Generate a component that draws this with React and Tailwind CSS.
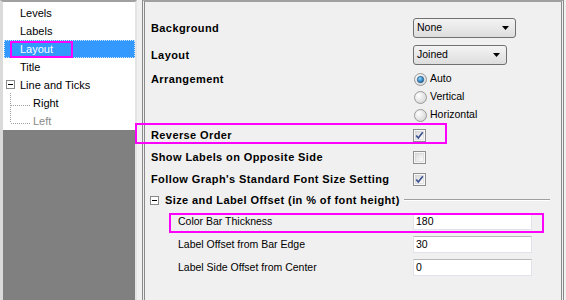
import React from 'react';

const font = { fontFamily: '"Liberation Sans", Arial, sans-serif' };

const ArrowDown = () => (
  <svg width="8" height="4" viewBox="0 0 8 4" className="shrink-0">
    <path d="M0 0 H7 L3.5 4 Z" fill="#000" />
  </svg>
);

const Dropdown = ({ value, className }) => (
  <div
    className={`h-[20px] flex items-center justify-between pl-[3px] pr-[5px] rounded-[3px] border border-[#707070] bg-gradient-to-b from-[#f4f4f4] to-[#dddddd] text-[10.5px] ${className}`}
  >
    <span>{value}</span>
    <ArrowDown />
  </div>
);

const Radio = ({ checked }) => (
  <svg width="13" height="13" viewBox="0 0 13 13" className="shrink-0">
    <defs>
      <radialGradient id="rb" cx="0.35" cy="0.35" r="0.8">
        <stop offset="0" stopColor="#ffffff" />
        <stop offset="1" stopColor="#d0d0d0" />
      </radialGradient>
      <radialGradient id="rd" cx="0.4" cy="0.35" r="0.7">
        <stop offset="0" stopColor="#8bd4ff" />
        <stop offset="1" stopColor="#0f5e9c" />
      </radialGradient>
    </defs>
    <circle cx="6.5" cy="6.5" r="6" fill="url(#rb)" stroke="#9a9a9a" />
    {checked && <circle cx="6.5" cy="6.5" r="3.2" fill="url(#rd)" stroke="#1a4d7a" strokeWidth="0.6" />}
  </svg>
);

const Checkbox = ({ checked }) => (
  <svg width="13" height="13" viewBox="0 0 13 13" className="shrink-0">
    <defs>
      <linearGradient id="cb" x1="0" y1="0" x2="1" y2="1">
        <stop offset="0" stopColor="#d8d8d8" />
        <stop offset="1" stopColor="#ffffff" />
      </linearGradient>
    </defs>
    <rect x="0.5" y="0.5" width="12" height="12" fill="#f7f7f7" stroke="#8e8f8f" />
    <rect x="2.5" y="2.5" width="8" height="8" fill="url(#cb)" stroke="#c8c8c8" strokeWidth="0.5" />
    {checked && (
      <path d="M3.2 6.4 L5.3 9 L9.8 3.2" fill="none" stroke="#3a4f8f" strokeWidth="1.6" />
    )}
  </svg>
);

const MinusBox = () => (
  <svg width="9" height="9" viewBox="0 0 9 9" className="shrink-0">
    <rect x="0.5" y="0.5" width="8" height="8" fill="#fff" stroke="#8a8a8a" />
    <path d="M2 4.5 H7" stroke="#000" strokeWidth="1" />
  </svg>
);

const Field = ({ value }) => (
  <div className="w-[119px] h-[17px] bg-white border border-[#e2e3ea] border-t-[#b9b9b9] pl-[2px] flex items-center text-[10.5px]">
    {value}
  </div>
);

const treeItems = [
  { label: 'Levels', indent: 'pl-[16px]' },
  { label: 'Labels', indent: 'pl-[16px]' },
  { label: 'Layout', indent: 'pl-[16px]', selected: true },
  { label: 'Title', indent: 'pl-[16px]' },
  { label: 'Line and Ticks', indent: 'pl-[16px]', minus: true },
  { label: 'Right', indent: 'pl-[29px]' },
  { label: 'Left', indent: 'pl-[29px]', muted: true },
];

const App = () => {
  return (
    <div className="relative w-[566px] h-[300px] bg-[#f0f0f0] flex overflow-hidden text-black" style={font}>
      {/* left tree */}
      <div className="w-[137px] h-full flex flex-col border-t-2 border-t-[#a0a0a0] border-l-[3px] border-l-[#dadada] border-r-2 border-r-[#e4e4e4]">
        <div className="relative bg-white pt-[2px] text-[11px]">
          {treeItems.map((item) => (
            <div
              key={item.label}
              className={`relative h-[18px] ml-[1px] flex items-center ${item.indent} ${
                item.selected ? 'bg-[#3399ff] text-white outline-1 outline-dotted outline-offset-[-1px] outline-[#c8e4ff]' : ''
              } ${item.muted ? 'text-[#8a8a8a]' : ''}`}
            >
              {item.minus && (
                <span className="absolute left-[2px] top-[4px]">
                  <MinusBox />
                </span>
              )}
              {item.label}
            </div>
          ))}
          <svg className="absolute left-0 top-0" width="30" height="130">
            <path d="M7.5 91 V121 M8 103.5 H27 M8 121.5 H27" stroke="#a0a0a0" strokeDasharray="1 1" fill="none" />
          </svg>
        </div>
        <div className="flex-1 bg-[#808080]" />
      </div>

      {/* right property panel */}
      <div className="ml-[5px] mr-[2px] flex-1 h-full border-t-2 border-t-[#a0a0a0] border-l-[3px] border-l-[#8a8a8a] border-r-[3px] border-r-[#8a8a8a] border-double pl-[6px]">
        <div className="flex flex-col text-[10.5px]">
          <div className="flex items-center h-[20px] mt-[16px] font-bold text-[11px] tracking-[0.4px]">
            <span className="w-[262px]">Background</span>
            <Dropdown value="None" className="w-[103px] font-normal tracking-normal" />
          </div>
          <div className="flex items-center h-[20px] mt-[7px] font-bold text-[11px] tracking-[0.4px]">
            <span className="w-[262px]">Layout</span>
            <Dropdown value="Joined" className="w-[94px] font-normal tracking-normal" />
          </div>
          <div className="flex mt-[5px]">
            <div className="w-[262px] h-[18px] flex items-center font-bold text-[11px] tracking-[0.4px]">Arrangement</div>
            <div className="flex flex-col">
              {[
                ['Auto', true],
                ['Vertical', false],
                ['Horizontal', false],
              ].map(([label, checked]) => (
                <div key={label} className="h-[18px] flex items-center gap-[3px] pl-[1px]">
                  <Radio checked={checked} />
                  <span>{label}</span>
                </div>
              ))}
            </div>
          </div>
          {[
            ['Reverse Order', true],
            ['Show Labels on Opposite Side', false],
            ["Follow Graph's Standard Font Size Setting", true],
          ].map(([label, checked]) => (
            <div key={label} className="flex items-center h-[22px]">
              <span className="w-[262px] font-bold text-[11px] tracking-[0.4px]">{label}</span>
              <Checkbox checked={checked} />
            </div>
          ))}
          <div className="flex items-center h-[20px] -ml-[1px] mr-[11px]">
            <MinusBox />
            <span className="ml-[6px] font-bold text-[11px] tracking-[0.4px]">
              Size and Label Offset (in % of font height)
            </span>
            <div className="flex-1 ml-[4px] border-t border-t-[#a0a0a0] border-b border-b-white" />
          </div>
          {[
            ['Color Bar Thickness', '180'],
            ['Label Offset from Bar Edge', '30'],
            ['Label Side Offset from Center', '0'],
          ].map(([label, value]) => (
            <div key={label} className="flex items-center h-[23px]">
              <span className="w-[262px] pl-[27px]">{label}</span>
              <Field value={value} />
            </div>
          ))}
        </div>
      </div>

      {/* highlight annotations */}
      <div className="absolute left-[10px] top-[41px] w-[63px] h-[17px] border-2 border-[#ff00ff]" />
      <div className="absolute left-[135px] top-[123px] w-[312px] h-[21px] border-2 border-[#ff00ff]" />
      <div className="absolute left-[169px] top-[213px] w-[375px] h-[20px] border-2 border-[#ff00ff]" />
    </div>
  );
};

export default App;
